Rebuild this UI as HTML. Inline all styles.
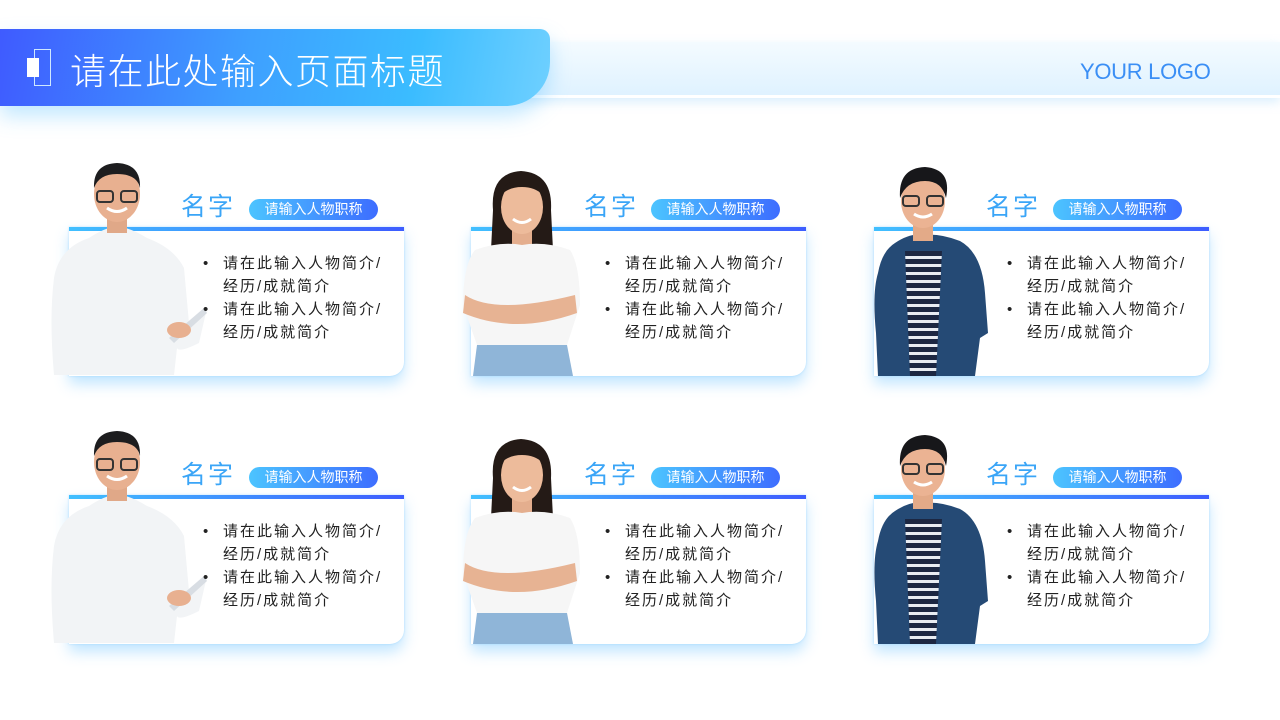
<!DOCTYPE html>
<html><head><meta charset="utf-8"><style>
*{margin:0;padding:0;box-sizing:border-box}
body{width:1280px;height:720px;position:relative;overflow:hidden;background:#fff;font-family:"Liberation Sans","Noto Sans CJK SC",sans-serif}
.strip{position:absolute;left:520px;top:42px;width:760px;height:56px;background:linear-gradient(180deg,#f4fbff,#dff2ff);border-bottom:3px solid #fff;box-shadow:0 4px 10px rgba(150,210,250,.35)}
.hdr{position:absolute;left:0;top:29px;width:550px;height:77px;border-radius:0 10px 44px 0;background:linear-gradient(100deg,#3f5bff 0%,#3ea0ff 45%,#3bbcff 75%,#6fd0ff 100%);box-shadow:0 10px 20px rgba(80,190,255,.35)}
.hdr h1{position:absolute;left:70px;top:14px;font-weight:300;font-size:36px;color:#fff;letter-spacing:1.5px;font-family:"Liberation Sans","Noto Sans CJK SC",sans-serif}
.ic1{position:absolute;left:34px;top:20px;width:17px;height:37px;border:1px solid #cfe8ff}
.ic2{position:absolute;left:27px;top:29px;width:12px;height:19px;background:#fff}
.logo{position:absolute;left:1080px;top:59px;font-size:22px;color:#3b8ff5;letter-spacing:-0.3px}
.card{position:absolute;width:335px;height:149px;background:#fff;border-top:4px solid #3d7bff;border-image:linear-gradient(90deg,#41c0ff,#3d5cff) 1;box-shadow:0 8px 14px rgba(120,200,255,.45),0 0 2px rgba(120,200,255,.5);border-radius:0 0 14px 0}
.name{position:absolute;font-size:25px;color:#3aa5f7;letter-spacing:2px}
.badge{position:absolute;width:129px;height:21px;border-radius:11px;background:linear-gradient(90deg,#4cc4ff,#3d6dff);color:#fff;font-size:14px;text-align:center;line-height:21px}
ul{position:absolute;list-style:none;font-size:15px;line-height:23px;color:#222;letter-spacing:2px}
ul li{position:relative;padding-left:20px}
ul li:before{content:"•";position:absolute;left:0}
svg{position:absolute}
</style></head><body>
<div class="strip"></div>
<div class="hdr"><div class="ic1"></div><div class="ic2"></div><h1>请在此处输入页面标题</h1></div>
<div class="logo">YOUR LOGO</div>

<div class="card" style="left:69px;top:227px"></div>
<div class="card" style="left:471px;top:227px"></div>
<div class="card" style="left:874px;top:227px"></div>
<div class="card" style="left:69px;top:495px"></div>
<div class="card" style="left:471px;top:495px"></div>
<div class="card" style="left:874px;top:495px"></div>

<svg style="left:49px;top:158px" width="165" height="218" viewBox="0 0 165 218">
<path d="M40 80 Q55 70 68 68 Q82 70 98 80 Q125 90 135 110 L140 165 Q150 155 158 150 L150 185 Q130 195 128 190 L125 217 L5 217 Q0 160 5 120 Q10 90 40 80Z" fill="#f2f4f6"/>
<rect x="58" y="55" width="20" height="20" fill="#e0a888"/>
<ellipse cx="68" cy="36" rx="23" ry="28" fill="#e8b090"/>
<path d="M45 30 Q44 6 68 5 Q92 6 91 30 Q88 16 68 16 Q50 16 45 30Z" fill="#1d1d1f"/>
<rect x="48" y="33" width="16" height="11" rx="3" fill="none" stroke="#333" stroke-width="2"/>
<rect x="72" y="33" width="16" height="11" rx="3" fill="none" stroke="#333" stroke-width="2"/>
<path d="M58 50 Q68 57 78 50" stroke="#fff" stroke-width="3" fill="none"/>
<path d="M120 180 L155 150 L158 155 L125 185Z" fill="#d8dde3"/>
<ellipse cx="130" cy="172" rx="12" ry="8" fill="#e8b090"/>
</svg>
<svg style="left:49px;top:426px" width="165" height="218" viewBox="0 0 165 218">
<path d="M40 80 Q55 70 68 68 Q82 70 98 80 Q125 90 135 110 L140 165 Q150 155 158 150 L150 185 Q130 195 128 190 L125 217 L5 217 Q0 160 5 120 Q10 90 40 80Z" fill="#f2f4f6"/>
<rect x="58" y="55" width="20" height="20" fill="#e0a888"/>
<ellipse cx="68" cy="36" rx="23" ry="28" fill="#e8b090"/>
<path d="M45 30 Q44 6 68 5 Q92 6 91 30 Q88 16 68 16 Q50 16 45 30Z" fill="#1d1d1f"/>
<rect x="48" y="33" width="16" height="11" rx="3" fill="none" stroke="#333" stroke-width="2"/>
<rect x="72" y="33" width="16" height="11" rx="3" fill="none" stroke="#333" stroke-width="2"/>
<path d="M58 50 Q68 57 78 50" stroke="#fff" stroke-width="3" fill="none"/>
<path d="M120 180 L155 150 L158 155 L125 185Z" fill="#d8dde3"/>
<ellipse cx="130" cy="172" rx="12" ry="8" fill="#e8b090"/>
</svg>

<svg style="left:455px;top:165px" width="135" height="211" viewBox="0 0 135 211">
<path d="M38 45 Q35 8 66 6 Q98 8 96 45 L98 85 L36 85Z" fill="#241a16"/>
<rect x="57" y="60" width="20" height="20" fill="#e4ae8e"/>
<ellipse cx="67" cy="42" rx="21" ry="27" fill="#edbb9b"/>
<path d="M46 30 Q50 14 67 14 Q84 14 88 30 Q80 22 67 22 Q54 22 46 30Z" fill="#241a16"/>
<path d="M58 54 Q67 61 76 54" stroke="#fff" stroke-width="3" fill="none"/>
<path d="M20 85 Q45 76 67 80 Q90 76 115 85 Q125 100 125 140 L112 180 L22 180 L8 140 Q8 100 20 85Z" fill="#f6f6f6"/>
<path d="M10 130 Q40 150 120 130 L122 148 Q60 170 8 148Z" fill="#e7b393"/>
<path d="M22 180 L112 180 L118 211 L18 211Z" fill="#8fb5d8"/>
</svg>
<svg style="left:455px;top:433px" width="135" height="211" viewBox="0 0 135 211">
<path d="M38 45 Q35 8 66 6 Q98 8 96 45 L98 85 L36 85Z" fill="#241a16"/>
<rect x="57" y="60" width="20" height="20" fill="#e4ae8e"/>
<ellipse cx="67" cy="42" rx="21" ry="27" fill="#edbb9b"/>
<path d="M46 30 Q50 14 67 14 Q84 14 88 30 Q80 22 67 22 Q54 22 46 30Z" fill="#241a16"/>
<path d="M58 54 Q67 61 76 54" stroke="#fff" stroke-width="3" fill="none"/>
<path d="M20 85 Q45 76 67 80 Q90 76 115 85 Q125 100 125 140 L112 180 L22 180 L8 140 Q8 100 20 85Z" fill="#f6f6f6"/>
<path d="M10 130 Q40 150 120 130 L122 148 Q60 170 8 148Z" fill="#e7b393"/>
<path d="M22 180 L112 180 L118 211 L18 211Z" fill="#8fb5d8"/>
</svg>

<svg style="left:870px;top:163px" width="125" height="213" viewBox="0 0 125 213">
<defs><pattern id="st" width="10" height="8" patternUnits="userSpaceOnUse"><rect width="10" height="8" fill="#1c2742"/><rect y="5" width="10" height="3" fill="#e8ecf2"/></pattern></defs>
<path d="M25 80 Q40 70 52 72 Q70 70 90 78 Q112 90 115 130 L118 170 L110 175 L105 213 L8 213 L6 170 Q2 130 8 110 Q12 88 25 80Z" fill="#254a75"/>
<path d="M35 88 L72 88 L66 213 L40 213Z" fill="url(#st)"/>
<rect x="43" y="58" width="20" height="20" fill="#e3aa88"/>
<ellipse cx="53" cy="38" rx="22" ry="27" fill="#ebb393"/>
<path d="M30 35 Q28 5 55 4 Q82 6 76 35 Q72 18 55 18 Q36 18 30 35Z" fill="#17171a"/>
<rect x="33" y="33" width="16" height="10" rx="3" fill="none" stroke="#333" stroke-width="2"/>
<rect x="57" y="33" width="16" height="10" rx="3" fill="none" stroke="#333" stroke-width="2"/>
<path d="M44 51 Q53 57 62 51" stroke="#fff" stroke-width="3" fill="none"/>
</svg>
<svg style="left:870px;top:431px" width="125" height="213" viewBox="0 0 125 213">
<path d="M25 80 Q40 70 52 72 Q70 70 90 78 Q112 90 115 130 L118 170 L110 175 L105 213 L8 213 L6 170 Q2 130 8 110 Q12 88 25 80Z" fill="#254a75"/>
<path d="M35 88 L72 88 L66 213 L40 213Z" fill="url(#st)"/>
<rect x="43" y="58" width="20" height="20" fill="#e3aa88"/>
<ellipse cx="53" cy="38" rx="22" ry="27" fill="#ebb393"/>
<path d="M30 35 Q28 5 55 4 Q82 6 76 35 Q72 18 55 18 Q36 18 30 35Z" fill="#17171a"/>
<rect x="33" y="33" width="16" height="10" rx="3" fill="none" stroke="#333" stroke-width="2"/>
<rect x="57" y="33" width="16" height="10" rx="3" fill="none" stroke="#333" stroke-width="2"/>
<path d="M44 51 Q53 57 62 51" stroke="#fff" stroke-width="3" fill="none"/>
</svg>

<div class="name" style="left:181px;top:187px">名字</div><div class="badge" style="left:249px;top:199px">请输入人物职称</div>
<ul style="left:203px;top:252px"><li>请在此输入人物简介/<br>经历/成就简介</li><li>请在此输入人物简介/<br>经历/成就简介</li></ul>
<div class="name" style="left:584px;top:187px">名字</div><div class="badge" style="left:651px;top:199px">请输入人物职称</div>
<ul style="left:605px;top:252px"><li>请在此输入人物简介/<br>经历/成就简介</li><li>请在此输入人物简介/<br>经历/成就简介</li></ul>
<div class="name" style="left:986px;top:187px">名字</div><div class="badge" style="left:1053px;top:199px">请输入人物职称</div>
<ul style="left:1007px;top:252px"><li>请在此输入人物简介/<br>经历/成就简介</li><li>请在此输入人物简介/<br>经历/成就简介</li></ul>

<div class="name" style="left:181px;top:455px">名字</div><div class="badge" style="left:249px;top:467px">请输入人物职称</div>
<ul style="left:203px;top:520px"><li>请在此输入人物简介/<br>经历/成就简介</li><li>请在此输入人物简介/<br>经历/成就简介</li></ul>
<div class="name" style="left:584px;top:455px">名字</div><div class="badge" style="left:651px;top:467px">请输入人物职称</div>
<ul style="left:605px;top:520px"><li>请在此输入人物简介/<br>经历/成就简介</li><li>请在此输入人物简介/<br>经历/成就简介</li></ul>
<div class="name" style="left:986px;top:455px">名字</div><div class="badge" style="left:1053px;top:467px">请输入人物职称</div>
<ul style="left:1007px;top:520px"><li>请在此输入人物简介/<br>经历/成就简介</li><li>请在此输入人物简介/<br>经历/成就简介</li></ul>
</body></html>
